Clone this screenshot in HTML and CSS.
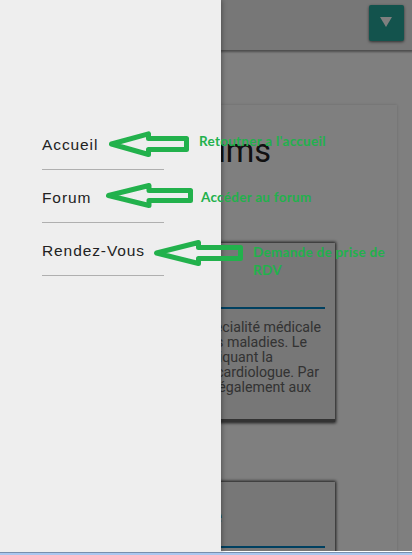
FILE: index.html
```html
<!DOCTYPE html>
<html lang="fr">
<head>
<meta charset="utf-8">
<title>Forums</title>
<link rel="stylesheet" href="styles.css">
</head>
<body>
<div class="screen">
  <div class="page">
    <header class="topbar"><button class="toggle" aria-label="Menu"><svg width="12" height="10" viewBox="0 0 12 10"><path d="M0 0H12L6 10Z" fill="#fff"/></svg></button></header>
    <main class="panel">
      <h1 class="title">ums</h1>
      <section class="card">
        <div class="card-head"></div>
        <div class="excerpt">
          <div class="l1">écialité médicale</div>
          <div class="l2">s maladies. Le</div>
          <div class="l3">iquant la</div>
          <div class="l4">cardiologue. Par</div>
          <div class="l5">également aux</div>
        </div>
      </section>
      <section class="card">
        <div class="card-head"><h2>e</h2></div>
      </section>
    </main>
  </div>
  <div class="shade"></div>
  <nav class="drawer">
    <a class="item">Accueil</a>
    <a class="item">Forum</a>
    <a class="item">Rendez-Vous</a>
  </nav>
  <svg class="arrows" width="412" height="555" viewBox="0 0 412 555" fill="none" stroke="#22b14c" stroke-width="5" stroke-linejoin="round">
    <path d="M111.5 144L148.5 133.8V138.5H186.5V149.5H148.5V154.5Z"/>
    <path d="M108.5 195.5L149 185.5V190.5H190.5V200.5H149V205.5Z"/>
    <path d="M156.5 253L198.5 242.5V247.5H240.5V258.5H198.5V263.5Z"/>
  </svg>
  <div class="note n1">Retoutner a l'accueil</div>
  <div class="note n2">Accéder au forum</div>
  <div class="note n3">Demande de prise de<br>RDV</div>
</div>
<footer class="taskbar"></footer>
</body>
</html>
```

FILE: styles.css
```css
* { box-sizing: border-box; }
body { margin: 0; width: 412px; height: 555px; overflow: hidden; background: #fff; font-family: Roboto, sans-serif; }
.screen { position: relative; height: 551px; }
.page { height: 551px; overflow: hidden; background: #fff; }
.topbar { height: 50px; padding: 5px 8px; display: flex; justify-content: flex-end; background: #eee; box-shadow: 0 1px 2px 1px rgba(0,0,0,.4); }
.toggle { width: 35px; height: 36px; padding: 0 1px 2px 0; border: 0; border-radius: 2px; background: #26a69a; box-shadow: 0 1px 3px rgba(0,0,0,.6); display: flex; align-items: center; justify-content: center; }
.panel { width: 382px; height: 520px; margin: 55px 0 0 15px; padding-right: 62px; box-shadow: 0 0 3px rgba(0,0,0,.18); overflow: hidden; }
.title { margin: 27px 64px 73px 0; text-align: right; font-size: 32.5px; line-height: 38px; font-weight: 400; color: #222; }
.card { height: 179px; margin: 0 0 60px 20px; padding: 0 10px; background: #eee; border-bottom: 3px solid #666; box-shadow: 0 0 3px 1px rgba(0,0,0,.8); }
.card-head { height: 66px; border-bottom: 2px solid #0080c0; display: flex; justify-content: flex-end; }
.card-head h2 { margin: 21px 103px 0 0; font-size: 20px; line-height: 26px; font-weight: 400; color: #0288d1; }
.excerpt { padding-top: 11px; font-size: 14.2px; line-height: 15px; color: #666; text-align: right; white-space: nowrap; }
.l1 { padding-right: 4px; }
.l2 { padding-right: 18px; }
.l3 { padding-right: 52px; }
.l4 { padding-right: 6px; }
.l5 { padding-right: 14px; }
.shade { position: absolute; inset: 0; background: rgba(0,0,0,.5); }
.drawer { position: absolute; left: 0; top: 0; width: 221px; height: 552px; padding: 117px 57px 0 42px; background: #eee; box-shadow: 1px 0 5px rgba(0,0,0,.35); }
.item { display: block; height: 53px; padding-top: 18px; border-bottom: 1px solid #afafaf; font: 15.5px/19px "Liberation Sans", sans-serif; letter-spacing: .9px; color: #222; }
.arrows { position: absolute; left: 0; top: 0; }
.note { position: absolute; font: 700 13.5px/18px Lato, sans-serif; letter-spacing: .27px; color: #22b14c; white-space: nowrap; }
.n1 { left: 199px; top: 132px; }
.n2 { left: 201px; top: 188px; }
.n3 { left: 253px; top: 243px; }
.taskbar { position: relative; height: 3px; margin-top: 1px; border-top: 1px solid #788fac; background: #abc7ef; }
```
